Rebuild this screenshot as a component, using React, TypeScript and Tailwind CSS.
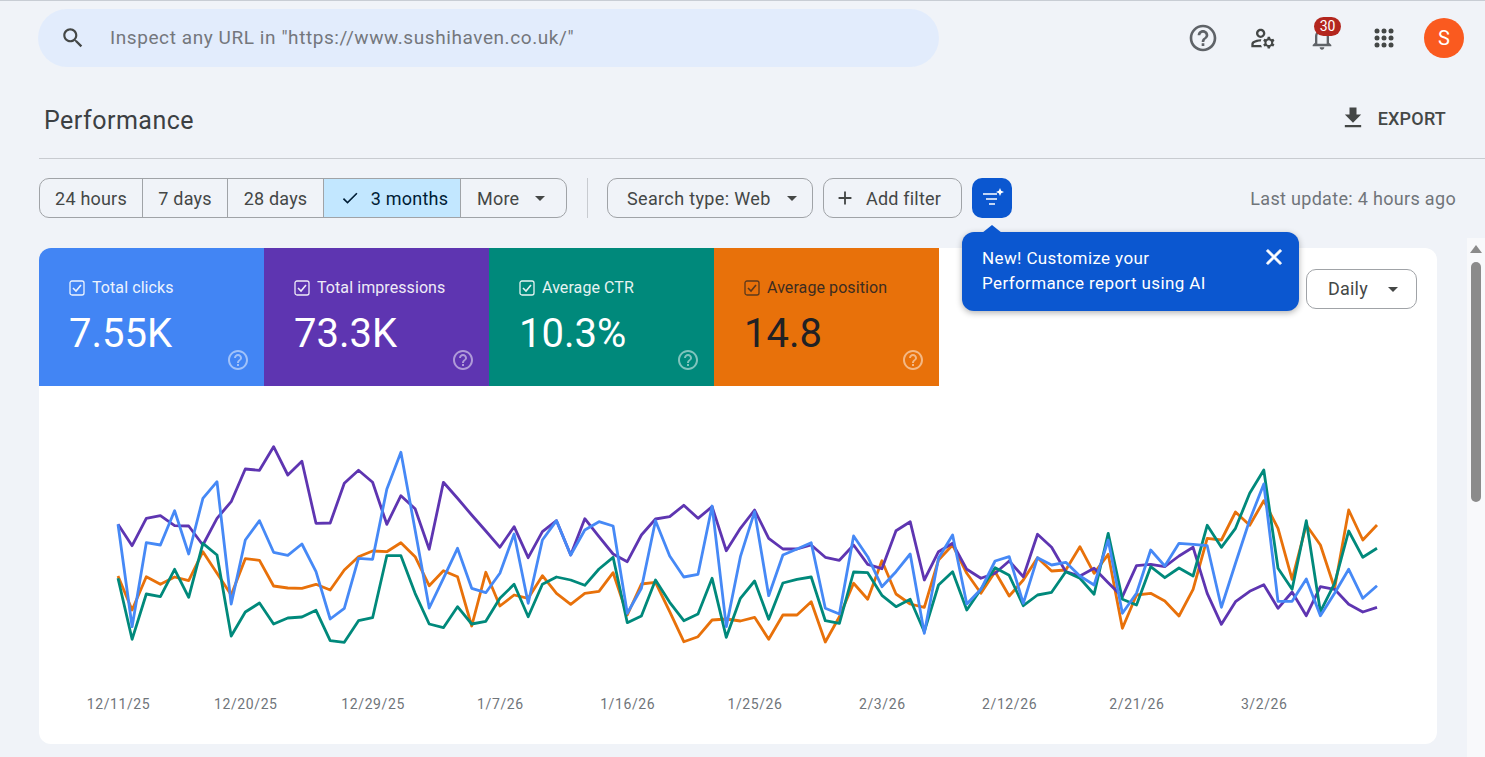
import React from "react";

const purple = [283,347,265,257,287,288,345,265,215,117,121,50,135,94,280,279,160,121,157,283,197,236,358,157,205,255,303,352,290,383,305,272,375,266,320,372,395,315,267,260,226,265,230,362,295,240,325,357,357,345,382,391,345,403,416,302,275,450,365,340,418,445,430,393,440,313,352,425,438,415,458,500,407,403,410,378,352,490,583,515,484,464,535,486,557,470,478,523,546,532];
const blue = [283,590,338,345,242,372,205,155,522,330,272,367,376,342,425,567,535,385,388,178,67,300,534,445,355,475,488,430,312,520,330,272,375,300,275,288,550,475,272,378,441,433,228,590,380,245,497,375,357,338,535,552,318,380,470,425,372,610,385,315,522,478,393,380,520,383,405,397,438,465,330,550,490,360,408,340,343,347,532,400,270,162,514,514,447,557,490,418,505,467];
const orange = [438,540,440,463,441,452,365,430,495,386,391,468,474,475,463,480,420,380,363,365,338,380,467,422,440,588,427,528,495,505,437,490,523,490,484,428,555,462,457,545,635,620,570,567,573,562,628,555,555,515,636,560,460,508,392,492,522,532,390,345,430,490,425,498,450,383,423,420,350,430,373,595,495,490,513,558,478,325,330,246,286,212,295,448,285,345,475,240,330,285];
const green = [445,628,492,500,418,502,340,375,618,546,519,582,564,561,541,632,637,572,563,377,377,490,582,593,530,582,574,505,463,560,463,441,450,466,417,382,578,558,450,517,572,552,445,622,505,453,568,459,448,441,572,580,426,428,496,530,508,605,465,425,540,478,413,436,527,495,487,425,445,493,310,508,525,410,443,414,438,286,352,295,190,120,415,478,272,545,460,303,382,355];

const pts = (a: number[]) => a.map((z, i) => `${(79 + 14.146 * i).toFixed(1)},${(44 + z / 3).toFixed(1)}`).join(" ");

const dates = ["12/11/25","12/20/25","12/29/25","1/7/26","1/16/26","1/25/26","2/3/26","2/12/26","2/21/26","3/2/26"];

const Ic = ({ d, className }: { d: string; className?: string }) => (
  <svg viewBox="0 0 24 24" fill="currentColor" className={className}><path d={d} /></svg>
);
const HELP = "M11 18h2v-2h-2v2zm1-16C6.48 2 2 6.48 2 12s4.48 10 10 10 10-4.48 10-10S17.52 2 12 2zm0 18c-4.41 0-8-3.59-8-8s3.59-8 8-8 8 3.59 8 8-3.59 8-8 8zm0-14c-2.21 0-4 1.79-4 4h2c0-1.1.9-2 2-2s2 .9 2 2c0 2-3 1.75-3 5h2c0-2.25 3-2.5 3-5 0-2.21-1.79-4-4-4z";

const Caret = ({ className }: { className?: string }) => (
  <svg viewBox="0 0 10 5" fill="currentColor" className={"w-[10px] h-[5px] " + (className ?? "")}><path d="M0 0h10L5 5z" /></svg>
);

const Tile = ({ label, value, bg, dark, rounded }: { label: string; value: string; bg: string; dark?: boolean; rounded?: boolean }) => (
  <div className={`w-[225px] h-[138px] pl-[30px] pt-[30px] flex flex-col ${bg} ${rounded ? "rounded-tl-xl" : ""} ${dark ? "text-[#202124]" : "text-white"}`}>
    <div className="flex items-center h-[20px]">
      <svg viewBox="0 0 16 16" className={`w-[16px] h-[16px] ${dark ? "opacity-70" : "opacity-90"}`} fill="none" stroke="currentColor">
        <rect x="1" y="1" width="14" height="14" rx="2" strokeWidth="1.3" />
        <path d="M4 8l3 3 5-6" strokeWidth="1.6" />
      </svg>
      <span className={`ml-[7px] text-[16px] tracking-[0.08px] leading-[20px] ${dark ? "opacity-85" : "opacity-90"}`}>{label}</span>
    </div>
    <div className="mt-[12px] text-[40px] leading-[48px]">{value}</div>
    <div className="flex justify-end pr-[14px] -mt-[10px]">
      <Ic d={HELP} className="w-[24px] h-[24px] text-white opacity-50" />
    </div>
  </div>
);

const cellCls = "h-full flex items-center justify-center border-r border-[#a0a3a7]";

export default function App() {
  return (
    <div className="w-[1485px] h-[757px] overflow-hidden bg-[#f0f3f8] border-t border-[#c8cdd4] flex flex-col font-['Roboto',sans-serif] text-[#444746]">
      {/* header */}
      <header className="h-[75px] shrink-0 flex items-center pl-[38px] pb-[1px]">
        <div className="w-[901px] h-[58px] rounded-[29px] bg-[#e2ecfc] flex items-center pl-[22px]">
          <Ic d="M15.5 14h-.79l-.28-.27C15.41 12.59 16 11.11 16 9.5 16 5.91 13.09 3 9.5 3S3 5.91 3 9.5 5.91 16 9.5 16c1.61 0 3.09-.59 4.23-1.57l.27.28v.79l5 4.99L20.49 19l-4.99-5zm-6 0C7.01 14 5 11.99 5 9.5S7.01 5 9.5 5 14 7.01 14 9.5 11.99 14 9.5 14z" className="w-[26px] h-[26px] text-[#444746]" />
          <span className="ml-[24px] text-[19px] tracking-[0.58px] text-[#74777c]">Inspect any URL in "https://www.sushihaven.co.uk/"</span>
        </div>
        <div className="ml-auto flex items-center pr-[21px]">
          <Ic d={HELP} className="w-[32px] h-[32px] text-[#5f6368]" />
          <svg viewBox="0 0 24 24" fill="currentColor" className="ml-[30px] w-[28px] h-[28px] text-[#444746]">
            <path d="M4 18v-.65c0-.34.16-.66.41-.81C6.1 15.53 8.03 15 10 15c.03 0 .05 0 .08.01.1-.7.3-1.37.59-1.98-.22-.02-.44-.03-.67-.03-2.42 0-4.68.67-6.61 1.82-.88.52-1.39 1.5-1.39 2.53V20h9.26c-.42-.6-.75-1.28-.97-2H4z" />
            <path d="M10 12c2.21 0 4-1.79 4-4s-1.79-4-4-4-4 1.79-4 4 1.79 4 4 4zm0-6c1.1 0 2 .9 2 2s-.9 2-2 2-2-.9-2-2 .9-2 2-2z" />
            <path d="M20.75 16c0-.22-.03-.42-.06-.63l1.14-1.01-1-1.73-1.45.49c-.32-.27-.68-.48-1.08-.63L18 11h-2l-.3 1.49c-.4.15-.76.36-1.08.63l-1.45-.49-1 1.73 1.14 1.01c-.03.21-.06.41-.06.63s.03.42.06.63l-1.14 1.01 1 1.73 1.45-.49c.32.27.68.48 1.08.63L16 21h2l.3-1.49c.4-.15.76-.36 1.08-.63l1.45.49 1-1.73-1.14-1.01c.03-.21.06-.41.06-.63zM17 18c-1.1 0-2-.9-2-2s.9-2 2-2 2 .9 2 2-.9 2-2 2z" />
          </svg>
          <div className="relative ml-[31px] w-[28px] h-[28px]">
            <Ic d="M12 22c1.1 0 2-.9 2-2h-4c0 1.1.9 2 2 2zm6-6v-5c0-3.07-1.63-5.64-4.5-6.32V4c0-.83-.67-1.5-1.5-1.5s-1.5.67-1.5 1.5v.68C7.64 5.36 6 7.92 6 11v5l-2 2v1h16v-1l-2-2zm-2 1H8v-6c0-2.48 1.51-4.5 4-4.5s4 2.02 4 4.5v6z" className="w-[28px] h-[28px] text-[#5f6368]" />
            <span className="absolute -top-[7px] left-[6px] w-[27px] h-[19px] rounded-full bg-[#b3261e] text-white text-[14px] leading-[19px] text-center">30</span>
          </div>
          <svg viewBox="0 0 20 20" fill="#444746" className="ml-[38px] w-[20px] h-[20px]">
            {[3, 10, 17].flatMap((y) => [3, 10, 17].map((x) => <circle key={`${x}-${y}`} cx={x} cy={y} r="2.5" />))}
          </svg>
          <div className="ml-[30px] w-[40px] h-[40px] rounded-full bg-[#fa5a1f] text-white text-[20px] flex items-center justify-center">S</div>
        </div>
      </header>

      {/* title */}
      <div className="ml-[39px] h-[83px] shrink-0 border-b border-[#c8cbd0] flex items-center justify-between pt-[8px]">
        <h1 className="ml-[5px] text-[25px] tracking-[0.5px] text-[#3c4043]">Performance</h1>
        <div className="flex items-center mr-[39px] -mt-[6px]">
          <Ic d="M19 9h-4V3H9v6H5l7 7 7-7zM5 18v2h14v-2H5z" className="w-[28px] h-[28px] text-[#444746]" />
          <span className="ml-[11px] pt-[1px] text-[18px] font-medium tracking-[0.2px] text-[#444746]">EXPORT</span>
        </div>
      </div>

      {/* filters */}
      <div className="shrink-0 h-[79px] pt-[19px] pl-[39px] pr-[29px] flex items-start text-[18px] tracking-[0.2px]">
        <div className="h-[40px] w-[528px] border border-[#a0a3a7] rounded-[10px] flex overflow-hidden">
          <div className={`${cellCls} w-[103px]`}>24 hours</div>
          <div className={`${cellCls} w-[85px]`}>7 days</div>
          <div className={`${cellCls} w-[96px]`}>28 days</div>
          <div className={`${cellCls} w-[137px] bg-[#c2e7ff] text-[#001d35] pl-[4px]`}>
            <Ic d="M9 16.17L4.83 12l-1.42 1.41L9 19 21 7l-1.41-1.41z" className="w-[20px] h-[20px] mr-[11px]" />
            3 months
          </div>
          <div className="flex-1 flex items-center pl-[16px]">
            More
            <Caret className="ml-[16px] text-[#444746]" />
          </div>
        </div>
        <div className="ml-[20px] w-px h-[40px] bg-[#c8cbd0]" />
        <div className="ml-[19px] h-[40px] w-[206px] border border-[#a0a3a7] rounded-[10px] flex items-center pl-[19px] tracking-[0.35px]">
          Search type: Web
          <Caret className="ml-[16px]" />
        </div>
        <div className="ml-[10px] h-[40px] w-[139px] border border-[#a0a3a7] rounded-[10px] flex items-center pl-[10px]">
          <Ic d="M19 13h-6v6h-2v-6H5v-2h6V5h2v6h6v2z" className="w-[22px] h-[22px]" />
          <span className="ml-[10px]">Add filter</span>
        </div>
        <div className="relative ml-[10px] w-[40px] h-[40px] rounded-[10px] bg-[#0b57d0] flex items-center justify-center">
          <svg viewBox="0 0 24 24" fill="white" className="w-[24px] h-[24px]">
            <path d="M3 7.2h14v1.6H3zM6 12.2h11v1.6H6zM9 17.2h6v1.6H9z" />
            <path d="M20 2l1.2 2.8L24 6l-2.8 1.2L20 10l-1.2-2.8L16 6l2.8-1.2z" />
          </svg>
          <div className="absolute left-[-10px] top-[54px] z-10 w-[337px] h-[79px] rounded-[12px] bg-[#0b57d0] shadow-[0_2px_6px_rgba(0,0,0,0.3)] text-white pl-[20px] pt-[14px] text-[17px] leading-[25px] tracking-[0.38px]">
            <svg viewBox="0 0 20 8" fill="#0b57d0" className="absolute left-[20px] -top-[7px] w-[20px] h-[8px]"><path d="M0 8L10 0l10 8z" /></svg>
            New! Customize your
            <br />
            Performance report using AI
            <svg viewBox="0 0 24 24" fill="white" stroke="white" strokeWidth="0.8" className="absolute right-[12px] top-[12px] w-[26px] h-[26px]">
              <path d="M19 6.41L17.59 5 12 10.59 6.41 5 5 6.41 10.59 12 5 17.59 6.41 19 12 13.41 17.59 19 19 17.59 13.41 12z" />
            </svg>
          </div>
        </div>
        <span className="ml-auto mt-[10px] text-[#70757a] text-[18px] tracking-[0.32px] leading-[22px]">Last update: 4 hours ago</span>
      </div>

      {/* main */}
      <div className="flex-1 min-h-0 flex">
        <div className="ml-[39px] mt-[10px] w-[1398px] h-[496px] bg-white rounded-xl flex flex-col">
          <div className="flex shrink-0">
            <Tile label="Total clicks" value="7.55K" bg="bg-[#4285f4]" rounded />
            <Tile label="Total impressions" value="73.3K" bg="bg-[#5e35b1]" />
            <Tile label="Average CTR" value="10.3%" bg="bg-[#00897b]" />
            <Tile label="Average position" value="14.8" bg="bg-[#e8710a]" dark />
            <div className="ml-auto mr-[20px] mt-[21px] w-[111px] h-[40px] border border-[#a0a3a7] rounded-[10px] flex items-center pl-[21px] pb-[2px] text-[18px] tracking-[0.2px]">
              Daily
              <Caret className="ml-[19px] w-[12px] mt-[2px]" />
            </div>
          </div>
          <svg width="1398" height="358" viewBox="0 0 1398 358" fill="none" strokeLinejoin="round" strokeWidth="2.8">
            <polyline points={pts(orange)} stroke="#e8710a" />
            <polyline points={pts(purple)} stroke="#5e35b1" />
            <polyline points={pts(green)} stroke="#00897b" />
            <polyline points={pts(blue)} stroke="#4689f6" />
            {dates.map((d, i) => (
              <text key={d} x={79.5 + 127.3 * i} y="323" textAnchor="middle" fill="#70757a" stroke="none" fontSize="14" letterSpacing="0.6" fontFamily="Roboto, sans-serif">{d}</text>
            ))}
          </svg>
        </div>
        <div className="ml-[30px] w-[18px] h-full bg-[#f8f9fb] flex flex-col items-center pt-[7px]">
          <svg viewBox="0 0 12 8" fill="#8b8b8b" className="w-[12px] h-[8px]"><path d="M0 8L6 0l6 8z" /></svg>
          <div className="mt-[9px] w-[10px] h-[240px] rounded-[5px] bg-[#8b8b8b]" />
        </div>
      </div>
    </div>
  );
}
